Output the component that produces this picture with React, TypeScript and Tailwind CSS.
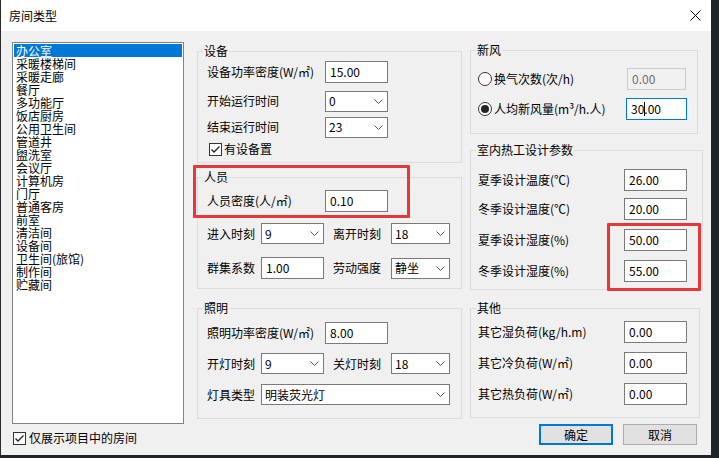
import React from 'react';

const rooms = [
  '办公室',
  '采暖楼梯间',
  '采暖走廊',
  '餐厅',
  '多功能厅',
  '饭店厨房',
  '公用卫生间',
  '管道井',
  '盥洗室',
  '会议厅',
  '计算机房',
  '门厅',
  '普通客房',
  '前室',
  '清洁间',
  '设备间',
  '卫生间(旅馆)',
  '制作间',
  '贮藏间',
];

interface groupProps {
  title: string;
  className: string;
  children: React.ReactNode;
}

function Group({ title, className, children }: groupProps) {
  return (
    <div className={`relative border border-[#dcdcdc] ${className}`}>
      <span className="absolute left-[5px] top-[-9px] bg-[#f0f0f0] px-px leading-[16px]">{title}</span>
      {children}
    </div>
  );
}

function Field({ value, w = 'w-[63px]', disabled, active }: { value: string; w?: string; disabled?: boolean; active?: boolean }) {
  let tone = 'border-[#7a7a7a] bg-white text-black';
  if (disabled) tone = 'border-[#cccccc] bg-[#f0f0f0] text-[#6d6d6d]';
  if (active) tone = 'border-[#0078d7] bg-white text-black';
  return (
    <div className={`h-[22px] ${w} border ${tone} flex items-center pl-[4px] leading-[14px]`}>
      {active ? (
        <>
          30
          <span className="relative">
            .
            <span className="absolute left-0 top-0 w-px h-[14px] bg-black" />
          </span>
          00
        </>
      ) : (
        value
      )}
    </div>
  );
}

function Select({ value, w = 'w-[63px]' }: { value: string; w?: string }) {
  return (
    <div className={`h-[21px] ${w} border border-[#7a7a7a] bg-white flex items-center pl-[3px] pr-[4px] leading-[14px]`}>
      <span>{value}</span>
      <svg className="ml-auto" width="9" height="5" viewBox="0 0 9 5">
        <path d="M0.5 0.5 L4.5 4.5 L8.5 0.5" stroke="#555" fill="none" strokeWidth="1" />
      </svg>
    </div>
  );
}

function CheckBox() {
  return (
    <div className="w-[13px] h-[13px] border border-[#333] bg-white flex items-center justify-center">
      <svg width="11" height="11" viewBox="0 0 11 11">
        <path d="M1.5 5.5 L4 8 L9.5 2.5" stroke="#222" fill="none" strokeWidth="1.3" />
      </svg>
    </div>
  );
}

function Radio({ checked }: { checked?: boolean }) {
  return (
    <div className="w-[14px] h-[14px] rounded-full border border-[#333] bg-white flex items-center justify-center">
      {checked && <div className="w-[8px] h-[8px] rounded-full bg-[#222]" />}
    </div>
  );
}

export default function App() {
  return (
    <div className="relative w-[719px] h-[458px] bg-[#1f2428] overflow-hidden text-[12px] text-black font-['Noto_Sans_CJK_SC','Noto_Sans',sans-serif]">
      <div className="w-[711px] h-[455px] border-l border-[#2b2b2b] flex flex-col">
        {/* title bar */}
        <div className="h-[31px] bg-white flex items-center pl-[8px] pr-[10px]">
          <span className="leading-[16px]">房间类型</span>
          <svg className="ml-auto" width="11" height="11" viewBox="0 0 11 11">
            <path d="M0.5 0.5 L10.5 10.5 M10.5 0.5 L0.5 10.5" stroke="#000" strokeWidth="1" />
          </svg>
        </div>

        <div className="flex-1 bg-[#f0f0f0] flex">
          {/* room list */}
          <div className="pl-[11px] pt-[11px] flex flex-col">
            <div className="w-[172px] h-[382px] border border-[#828282] bg-white p-px">
              {rooms.map((r, i) => (
                <div
                  key={r}
                  className={`h-[13px] leading-[13px] pl-[2px] whitespace-nowrap ${i === 0 ? 'bg-[#0078d7] text-white' : ''}`}
                >
                  {r}
                </div>
              ))}
            </div>
            <div className="mt-[7px] ml-px flex items-center gap-[3px]">
              <CheckBox />
              <span className="leading-[14px]">仅展示项目中的房间</span>
            </div>
          </div>

          {/* middle column */}
          <div className="ml-[13px] pt-[20px] w-[265px] flex flex-col">
            <Group title="设备" className="h-[112px] pt-[9px] pl-[9px]">
              <div className="flex items-center h-[22px]">
                <span className="w-[118px]">设备功率密度(W/㎡)</span>
                <Field value="15.00" />
              </div>
              <div className="flex items-center h-[22px] mt-[7px]">
                <span className="w-[118px]">开始运行时间</span>
                <Select value="0" />
              </div>
              <div className="flex items-center h-[22px] mt-[4px]">
                <span className="w-[118px]">结束运行时间</span>
                <Select value="23" />
              </div>
              <div className="flex items-center mt-[4px] ml-[2px] gap-[2px]">
                <CheckBox />
                <span className="leading-[14px]">有设备置</span>
              </div>
            </Group>

            <Group title="人员" className="mt-[14px] h-[112px] pt-[12px] pl-[9px]">
              <div className="flex items-center h-[22px]">
                <span className="w-[118px]">人员密度(人/㎡)</span>
                <Field value="0.10" />
              </div>
              <div className="flex items-center h-[21px] mt-[11px]">
                <span className="w-[54px]">进入时刻</span>
                <Select value="9" />
                <span className="w-[58px] ml-[9px]">离开时刻</span>
                <Select value="18" w="w-[59px]" />
              </div>
              <div className="flex items-center h-[22px] mt-[13px]">
                <span className="w-[54px]">群集系数</span>
                <Field value="1.00" />
                <span className="w-[58px] ml-[9px]">劳动强度</span>
                <Select value="静坐" w="w-[59px]" />
              </div>
            </Group>

            <Group title="照明" className="mt-[19px] h-[111px] pt-[13px] pl-[9px]">
              <div className="flex items-center h-[22px]">
                <span className="w-[118px]">照明功率密度(W/㎡)</span>
                <Field value="8.00" />
              </div>
              <div className="flex items-center h-[21px] mt-[9px]">
                <span className="w-[54px]">开灯时刻</span>
                <Select value="9" />
                <span className="w-[58px] ml-[9px]">关灯时刻</span>
                <Select value="18" w="w-[59px]" />
              </div>
              <div className="flex items-center h-[21px] mt-[10px]">
                <span className="w-[54px]">灯具类型</span>
                <Select value="明装荧光灯" w="w-[189px]" />
              </div>
            </Group>
          </div>

          {/* right column */}
          <div className="ml-[8px] pt-[19px] flex flex-col">
            <Group title="新风" className="w-[228px] h-[84px] pt-[17px] pl-[7px]">
              <div className="flex items-center h-[22px]">
                <Radio />
                <span className="w-[133px] ml-[2px]">换气次数(次/h)</span>
                <Field value="0.00" w="w-[59px]" disabled />
              </div>
              <div className="flex items-center h-[22px] mt-[8px]">
                <Radio checked />
                <span className="w-[132px] ml-[2px]">人均新风量(m³/h.人)</span>
                <Field value="30.00" w="w-[61px]" active />
              </div>
            </Group>

            <Group title="室内热工设计参数" className="mt-[16px] w-[233px] h-[140px] pt-[18px] pl-[7px]">
              <div className="flex items-center h-[22px]">
                <span className="w-[146px]">夏季设计温度(℃)</span>
                <Field value="26.00" />
              </div>
              <div className="flex items-center h-[22px] mt-[7px]">
                <span className="w-[146px]">冬季设计温度(℃)</span>
                <Field value="20.00" />
              </div>
              <div className="flex items-center h-[22px] mt-[9px]">
                <span className="w-[146px]">夏季设计湿度(%)</span>
                <Field value="50.00" />
              </div>
              <div className="flex items-center h-[22px] mt-[9px]">
                <span className="w-[146px]">冬季设计湿度(%)</span>
                <Field value="55.00" />
              </div>
            </Group>

            <Group title="其他" className="mt-[18px] w-[230px] h-[110px] pt-[12px] pl-[7px]">
              <div className="flex items-center h-[22px]">
                <span className="w-[146px]">其它湿负荷(kg/h.m)</span>
                <Field value="0.00" />
              </div>
              <div className="flex items-center h-[22px] mt-[9px]">
                <span className="w-[146px]">其它冷负荷(W/㎡)</span>
                <Field value="0.00" />
              </div>
              <div className="flex items-center h-[22px] mt-[9px]">
                <span className="w-[146px]">其它热负荷(W/㎡)</span>
                <Field value="0.00" />
              </div>
            </Group>

            <div className="mt-[6px] pl-[69px] flex gap-[10px]">
              <button className="w-[74px] h-[21px] border-2 border-[#0078d7] bg-[#e1e1e1] flex items-center justify-center leading-[14px]">
                确定
              </button>
              <button className="w-[74px] h-[21px] border border-[#adadad] bg-[#e1e1e1] flex items-center justify-center leading-[14px]">
                取消
              </button>
            </div>
          </div>
        </div>
      </div>

      {/* highlight marks */}
      <div className="absolute left-[193px] top-[165px] w-[217px] h-[53px] border-[3px] border-[#e5383b] rounded-[1px]" />
      <div className="absolute left-[607px] top-[223px] w-[94px] h-[68px] border-[3px] border-[#e5383b] rounded-[1px]" />
    </div>
  );
}
